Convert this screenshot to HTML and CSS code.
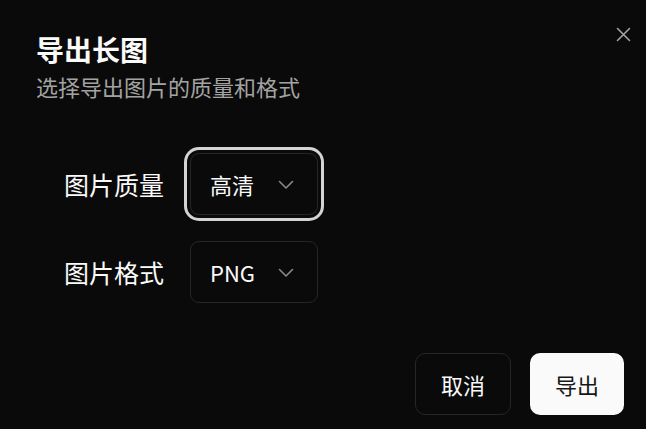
FILE: index.html
```html
<!DOCTYPE html>
<html lang="zh-CN">
<head>
<meta charset="utf-8">
<link rel="stylesheet" href="styles.css">
</head>
<body>
<div class="dialog">
  <button class="close" aria-label="关闭">
    <svg width="15" height="15" viewBox="0 0 15 15"><path d="M1.5 1.5 L13.5 13.5 M13.5 1.5 L1.5 13.5" stroke="#a3a3a3" stroke-width="1.6" stroke-linecap="round" fill="none"/></svg>
  </button>
  <div class="header">
    <h2 class="title">导出长图</h2>
    <p class="desc">选择导出图片的质量和格式</p>
  </div>
  <div class="form">
    <div class="row">
      <span class="label">图片质量</span>
      <div class="select focused">
        <span class="value">高清</span>
        <svg class="chev" width="16" height="10" viewBox="0 0 16 10"><path d="M1.5 1.5 L8 8 L14.5 1.5" stroke="#8a8a8a" stroke-width="1.6" fill="none" stroke-linecap="round" stroke-linejoin="round"/></svg>
      </div>
    </div>
    <div class="row">
      <span class="label">图片格式</span>
      <div class="select">
        <span class="value">PNG</span>
        <svg class="chev" width="16" height="10" viewBox="0 0 16 10"><path d="M1.5 1.5 L8 8 L14.5 1.5" stroke="#8a8a8a" stroke-width="1.6" fill="none" stroke-linecap="round" stroke-linejoin="round"/></svg>
      </div>
    </div>
  </div>
  <div class="footer">
    <button class="btn outline">取消</button>
    <button class="btn primary">导出</button>
  </div>
</div>
</body>
</html>
```
FILE: styles.css
```css
* { box-sizing: border-box; }
html, body {
  margin: 0;
  padding: 0;
  background: #0a0a0a;
  width: 646px;
  height: 429px;
  overflow: hidden;
}
body {
  font-family: "Noto Sans CJK SC", "Noto Sans", sans-serif;
  color: #fafafa;
}
.dialog {
  position: relative;
  padding: 31px 22px 0 36px;
  display: flex;
  flex-direction: column;
}
.close {
  position: absolute;
  top: 27px;
  right: 15px;
  width: 15px;
  height: 15px;
  padding: 0;
  border: 0;
  background: none;
  display: flex;
}
.header {
  display: flex;
  flex-direction: column;
  gap: 4px;
}
.title {
  margin: 0;
  font-size: 28px;
  line-height: 36px;
  font-weight: 700;
  color: #fafafa;
}
.desc {
  margin: 0;
  font-size: 22px;
  line-height: 30px;
  color: #a3a3a3;
}
.form {
  margin-top: 52px;
  padding-left: 28px;
  display: flex;
  flex-direction: column;
  gap: 26px;
}
.row {
  display: flex;
  align-items: center;
}
.label {
  width: 126px;
  font-size: 25px;
  line-height: 34px;
  color: #fafafa;
}
.select {
  width: 128px;
  height: 62px;
  border: 1px solid #262626;
  border-radius: 9px;
  background: #0a0a0a;
  display: flex;
  align-items: center;
  justify-content: space-between;
  padding: 0 23px 0 19px;
}
.select.focused {
  box-shadow: 0 0 0 3px #0a0a0a, 0 0 0 6px #d4d4d4;
}
.value {
  font-size: 22px;
  line-height: 30px;
  color: #fafafa;
}
.chev { display: block; margin-top: 1px; }
.footer {
  margin-top: 50px;
  display: flex;
  justify-content: flex-end;
  gap: 19px;
}
.btn {
  height: 62px;
  border-radius: 10px;
  font-family: "Noto Sans CJK SC", "Noto Sans", sans-serif;
  font-size: 22px;
  line-height: 30px;
  padding: 0;
}
.outline {
  width: 96px;
  border: 1px solid #262626;
  background: #0a0a0a;
  color: #fafafa;
}
.primary {
  width: 94px;
  border: 0;
  background: #fafafa;
  color: #171717;
}
```
